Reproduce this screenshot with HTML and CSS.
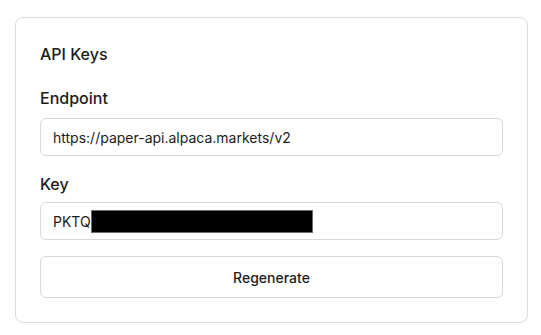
FILE: index.html
```html
<!DOCTYPE html>
<html lang="en">
  <head>
    <meta charset="UTF-8" />
    <meta name="viewport" content="width=device-width, initial-scale=1.0" />
    <title>API Keys</title>
    <link rel="stylesheet" href="styles.css">
  </head>
  <body>
    <div class="card">
      <h2 class="card-title">API Keys</h2>

      <div class="field">
        <label for="endpoint">Endpoint</label>
        <div class="input" id="endpoint">https://paper-api.alpaca.markets/v2</div>
      </div>

      <div class="field field-key">
        <label for="key">Key</label>
        <div class="input" id="key">PKTQ<span class="redacted"></span></div>
      </div>

      <button type="button" class="btn">Regenerate</button>
    </div>
  </body>
</html>
```

FILE: styles.css
```css
* {
  margin: 0;
  padding: 0;
  box-sizing: border-box;
  font-family: Inter, "Noto Sans", sans-serif;
}

body {
  background-color: #ffffff;
  color: #1c1c1c;
  padding: 17px 13px 0 15px;
}

.card {
  width: 513px;
  height: 306px;
  border: 1px solid #dcdcdc;
  border-radius: 8px;
  padding: 24px;
  display: flex;
  flex-direction: column;
}

.card-title {
  font-size: 16px;
  line-height: 24px;
  font-weight: 500;
  margin-bottom: 20px;
}

.field {
  display: flex;
  flex-direction: column;
  gap: 8px;
}

.field-key {
  margin-top: 16px;
  gap: 6px;
}

label {
  font-size: 16px;
  line-height: 24px;
  font-weight: 500;
}

.input {
  height: 38px;
  border: 1px solid #d9d9d9;
  border-radius: 6px;
  padding: 0 12px;
  font-size: 14px;
  display: flex;
  align-items: center;
  color: #1c1c1c;
}

.redacted {
  display: inline-block;
  width: 222px;
  height: 23px;
  background-color: #000000;
  border: 1px solid #6a6a6a;
}

.btn {
  margin-top: 16px;
  height: 42px;
  border: 1px solid #d9d9d9;
  border-radius: 6px;
  background-color: #ffffff;
  color: #1c1c1c;
  font-size: 14px;
  font-weight: 500;
  cursor: pointer;
}
```
